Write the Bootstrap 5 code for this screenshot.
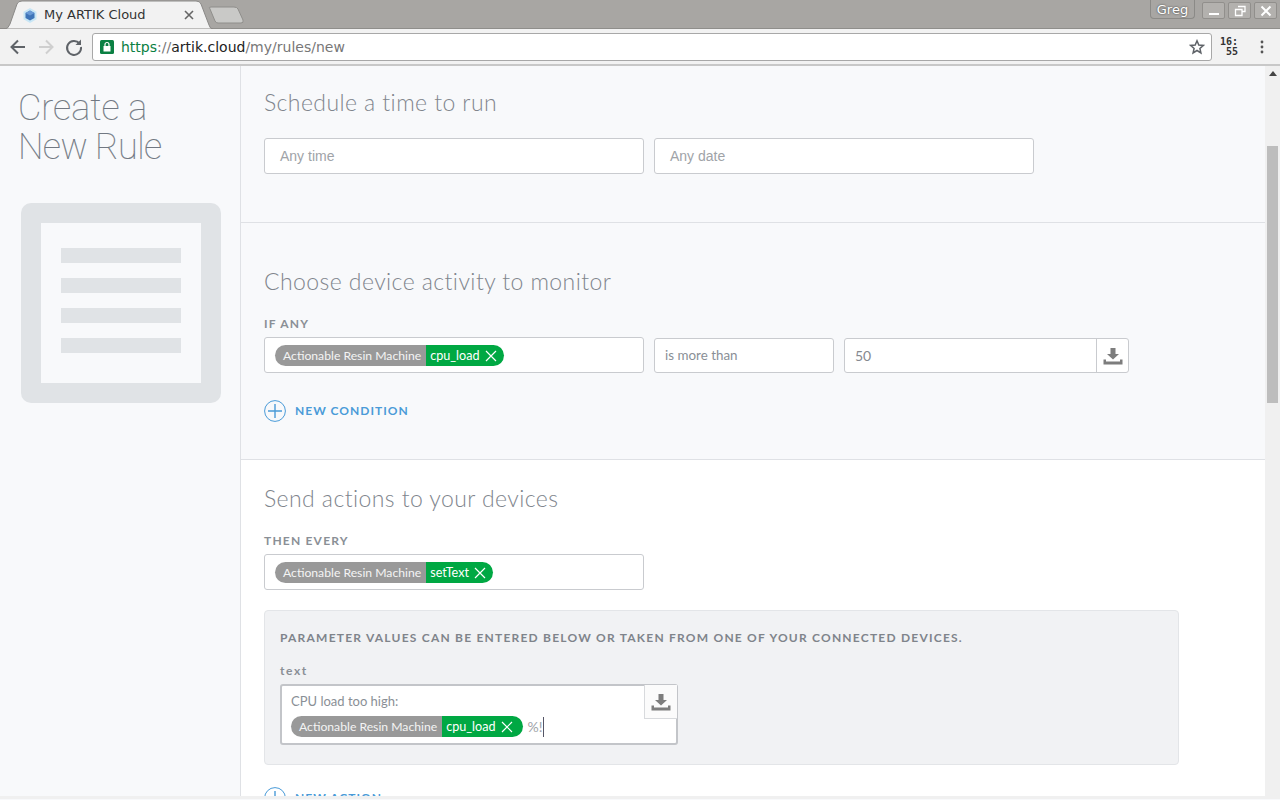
<!DOCTYPE html>
<html lang="en">
<head>
<meta charset="UTF-8">
<title>My ARTIK Cloud</title>
<link rel="stylesheet" href="https://cdn.jsdelivr.net/npm/bootstrap@5.3.0/dist/css/bootstrap.min.css">
<style>
html, body { height: 100%; overflow: hidden; }
body { background: #f8f9fb; font-family: "Lato", "Liberation Sans", sans-serif; color: #8a8f96; }
.app-shell { width: 1280px; height: 800px; }
.tab-strip { height: 29px; background: #a8a6a3; border-bottom: 1px solid #8f8e8b; }
.tab-shape { width: 245px; height: 29px; flex: none; }
.tab-title { font: 13px "DejaVu Sans", sans-serif; fill: #333; }
.user-chip { width: 45px; height: 19px; margin-right: 4px; border: 1px solid #8b8a87; border-top: 0; border-radius: 0 0 4px 4px; font: 13px "DejaVu Sans", sans-serif; color: #fff; text-shadow: 0 0 2px #333; line-height: 20px; text-align: center; }
.win-btn { width: 23px; height: 17px; margin-left: 3px; margin-top: 2px; border: 1px solid #918f8c; border-radius: 2px; background: #b3b1ae; }
.win-last { margin-right: 3px; }
.tool-bar { height: 37px; background: #f2f2f2; border-bottom: 2px solid #c8c8c8; padding-left: 8px; }
.tool-icon { width: 20px; height: 20px; margin-right: 8px; flex: none; }
.url-box { width: 1120px; height: 28px; background: #fff; border: 1px solid #a8a8a8; border-radius: 3px; font: 14px "DejaVu Sans", sans-serif; padding: 0 6px 0 7px; }
.url-lock { margin-right: 7px; flex: none; }
.url-green { color: #0b8043; }
.url-dim { color: #777; }
.url-dark { color: #222; }
.clock-text { width: 20px; margin-left: 8px; font: bold 10px/10px "DejaVu Sans Mono", monospace; color: #333; }
.kebab-icon { margin-left: 20px; }
.page-body { height: 733px; }
.side-col { width: 241px; flex: none; border-right: 1px solid #dfe1e5; padding: 23px 0 0 18px; }
.side-title { font: 100 36px/39px "Roboto", sans-serif; color: #717882; margin: 0 0 36px; -webkit-text-stroke: .15px #717882; }
.title-tight { letter-spacing: -.6px; }
.rule-art { width: 200px; height: 200px; margin-left: 3px; background: #e0e3e6; border-radius: 10px; padding: 20px; }
.rule-art-inner { width: 160px; height: 160px; background: #f8f9fb; padding: 25px 20px 0; }
.rule-art-inner span { display: block; height: 15px; background: #e0e3e6; margin-bottom: 15px; }
.main-col { width: 1024px; flex: none; overflow: hidden; }
.scroll-rail { width: 15px; flex: none; background: #f0f0f0; }
.scroll-up { width: 0; height: 0; margin: 5px auto 0; border: 4px solid transparent; border-top: 0; border-bottom: 5px solid #444; }
.scroll-thumb { width: 11px; height: 257px; margin: 70px auto 0; background: #bdbdbd; }
.sect-a { height: 157px; padding: 22px 23px 0; border-bottom: 1px solid #dfe1e5; }
.sect-b { height: 237px; padding: 44px 23px 0; border-bottom: 1px solid #dfe1e5; }
.sect-c { padding: 24px 23px 0; background: #fff; height: 340px; }
.sect-heading { font-size: 23px; font-weight: 300; line-height: 28px; color: #80858d; letter-spacing: .42px; margin: 0 0 22px; }
.cap-label { font-size: 12px; font-weight: 700; letter-spacing: 1.2px; line-height: 14px; color: #8a8f96; margin: 0 0 6px; }
.fld-row { gap: 10px; }
.fld { height: 36px; background: #fff; border: 1px solid #c9cbcf; border-radius: 3px; font-size: 14px; }
.fld-any { width: 380px; padding: 0 15px; color: #a0a3a8; font-family: "Liberation Sans", sans-serif; }
.fld-tags { width: 380px; padding-left: 10px; }
.fld-op { width: 180px; height: 35px; margin-top: 1px; padding-left: 10px; font-size: 13.4px; color: #8a8f96; }
.fld-val { width: 285px; height: 35px; margin-top: 1px; }
.fld-val-num { flex: 1; padding-left: 10px; color: #85898f; }
.fld-val-btn { width: 32px; border-left: 1px solid #c9cbcf; height: 100%; }
.tag-grey { height: 21px; background: #999; color: #f4f4f4; font-size: 12.2px; line-height: 21px; border-radius: 11px 0 0 11px; padding: 0 5px 0 8px; white-space: nowrap; }
.tag-green { height: 21px; background: #00a843; color: #fff; font-size: 12.6px; line-height: 21px; border-radius: 0 11px 11px 0; padding: 0 7px 0 4px; white-space: nowrap; }
.tag-wide { padding-right: 10px; }
.tag-x { width: 12px; height: 12px; margin-left: 5px; vertical-align: -2px; }
.add-link { color: #4a9bd8; font-size: 12px; font-weight: 700; letter-spacing: 1.0px; gap: 9px; text-decoration: none; }
.add-cond { margin-top: 27px; }
.add-act { margin-top: 22px; }
.param-box { width: 915px; height: 155px; margin-top: 20px; background: #f1f2f4; border: 1px solid #e3e5e8; border-radius: 4px; padding: 20px 15px 0; }
.param-note { font-size: 12px; font-weight: 700; letter-spacing: 1.22px; line-height: 14px; color: #7f848b; margin: 0 0 19px; }
.param-label { font-size: 12px; font-weight: 700; letter-spacing: 1.6px; line-height: 14px; color: #8a8f96; margin: 0 0 6px; }
.param-input { width: 398px; height: 61px; background: #fff; border: 2px solid #c3c5c9; border-radius: 3px; padding: 7px 0 0 9px; font-size: 13px; color: #8a8f96; }
.param-line { line-height: 16px; margin-bottom: 7px; }
.param-btn { top: -1px; right: -1px; width: 33px; height: 34px; background: #fbfbfb; border: 1px solid #d8dadd; border-top: 0; border-right: 0; }
.pct-text { margin-left: 5px; color: #a0a3a8; font-size: 14px; }
.caret-mark { display: inline-block; width: 1px; height: 20px; background: #556; }
.bottom-strip { height: 3px; background: #f0f0f0; margin-top: -3px; position: relative; }
</style>
</head>
<body>
<div class="app-shell d-flex flex-column">
  <div class="tab-strip d-flex">
    <svg class="tab-shape" viewBox="0 0 245 29">
      <path d="M210 9 Q208 7 211 7 H234 Q237 7 238 9 L243 20 Q244 23 241 23 H218 Q216 23 215 21 Z" fill="#c9c9c7" stroke="#8f8e8b"/>
      <path d="M0 29 H5 Q8 29 10 24 L17 4 Q18 1 22 1 H196 Q200 1 201 4 L209 25 Q210 29 213 29 H0" fill="#f2f2f2" stroke="#8a8987"/>
      <path d="M30 8 L36.5 11.7 V19.3 L30 23 L23.5 19.3 V11.7 Z" fill="#c8e6f5"/>
      <path d="M30 10.5 L34.5 13 V18 L30 20.5 L25.5 18 V13 Z" fill="#3f74b8"/>
      <path d="M30 10.5 L34.5 13 L30 15.5 L25.5 13 Z" fill="#6a9ad6"/>
      <text x="44" y="19" class="tab-title">My ARTIK Cloud</text>
      <path d="M185 11 L193 19 M193 11 L185 19" stroke="#666" stroke-width="1.6"/>
    </svg>
    <div class="ms-auto d-flex align-items-start">
      <div class="user-chip">Greg</div>
      <div class="win-btn d-flex align-items-center justify-content-center"><svg width="12" height="12" viewBox="0 0 12 12"><path d="M1 9 H11" stroke="#fff" stroke-width="2"/></svg></div>
      <div class="win-btn d-flex align-items-center justify-content-center"><svg width="12" height="12" viewBox="0 0 12 12"><path d="M4 1.5 H11 V6.5 H8 M1.5 4.5 H8 V10.5 H1.5 Z" stroke="#fff" fill="none" stroke-width="1.3"/></svg></div>
      <div class="win-btn win-last d-flex align-items-center justify-content-center"><svg width="12" height="12" viewBox="0 0 12 12"><path d="M1.5 1.5 L10.5 10.5 M10.5 1.5 L1.5 10.5" stroke="#fff" stroke-width="2"/></svg></div>
    </div>
  </div>
  <div class="tool-bar d-flex align-items-center">
    <svg class="tool-icon" viewBox="0 0 20 20"><path d="M17 10 H4 M10 3.5 L3.5 10 L10 16.5" fill="none" stroke="#5f6368" stroke-width="2"/></svg>
    <svg class="tool-icon" viewBox="0 0 20 20"><path d="M3 10 H16 M10 3.5 L16.5 10 L10 16.5" fill="none" stroke="#cfcfcf" stroke-width="2"/></svg>
    <svg class="tool-icon" viewBox="0 0 20 20"><path d="M15.5 6.5 A7 7 0 1 0 17 10" fill="none" stroke="#5f6368" stroke-width="2"/><path d="M17 2.5 V8 H11.5 Z" fill="#5f6368"/></svg>
    <div class="url-box d-flex align-items-center">
      <svg width="14" height="14" viewBox="0 0 14 14" class="url-lock"><rect width="14" height="14" rx="1.5" fill="#0b8043"/><rect x="3.5" y="6" width="7" height="5.5" fill="#fff"/><path d="M5 6 V4.5 A2 2 0 0 1 9 4.5 V6" fill="none" stroke="#fff" stroke-width="1.2"/></svg>
      <span><span class="url-green">https</span><span class="url-dim">://</span><span class="url-dark">artik.cloud</span><span class="url-dim">/my/rules/new</span></span>
      <svg width="16" height="16" viewBox="0 0 16 16" class="ms-auto"><path d="M8 1.8 L9.8 6 L14.3 6.4 L10.9 9.4 L11.9 13.9 L8 11.5 L4.1 13.9 L5.1 9.4 L1.7 6.4 L6.2 6 Z" fill="none" stroke="#5f6368" stroke-width="1.5"/></svg>
    </div>
    <div class="clock-text">16:<br>&nbsp;55</div>
    <svg width="4" height="14" viewBox="0 0 4 14" class="kebab-icon"><circle cx="2" cy="2" r="1.4" fill="#555"/><circle cx="2" cy="7" r="1.4" fill="#555"/><circle cx="2" cy="12" r="1.4" fill="#555"/></svg>
  </div>
  <div class="page-body d-flex">
    <aside class="side-col">
      <h1 class="side-title">Create a<br><span class="title-tight">New Rule</span></h1>
      <div class="rule-art"><div class="rule-art-inner"><span></span><span></span><span></span><span></span></div></div>
    </aside>
    <main class="main-col">
      <section class="sect-a">
        <h2 class="sect-heading">Schedule a time to run</h2>
        <div class="d-flex fld-row">
          <div class="fld fld-any d-flex align-items-center">Any time</div>
          <div class="fld fld-any d-flex align-items-center">Any date</div>
        </div>
      </section>
      <section class="sect-b">
        <h2 class="sect-heading">Choose device activity to monitor</h2>
        <p class="cap-label">IF ANY</p>
        <div class="d-flex fld-row align-items-start">
          <div class="fld fld-tags d-flex align-items-center"><span class="tag-grey">Actionable Resin Machine</span><span class="tag-green">cpu_load<svg class="tag-x" viewBox="0 0 12 12"><path d="M1 1 L11 11 M11 1 L1 11" stroke="#fff" stroke-width="1.2"/></svg></span></div>
          <div class="fld fld-op d-flex align-items-center">is more than</div>
          <div class="fld fld-val d-flex align-items-center"><span class="fld-val-num">50</span><span class="fld-val-btn d-flex align-items-center justify-content-center"><svg width="20" height="18" viewBox="0 0 20 18"><path d="M7.5 1 H12.5 V7 H16 L10 12.5 L4 7 H7.5 Z M.5 12.5 H3 V14.5 H17 V12.5 H19.5 V17.5 H.5 Z" fill="#7d7d7d"/></svg></span></div>
        </div>
        <a class="add-link add-cond d-flex align-items-center" href="#"><svg width="22" height="22" viewBox="0 0 22 22"><circle cx="11" cy="11" r="10.4" fill="none" stroke="#4a9bd8"/><path d="M11 4 V18 M4 11 H18" stroke="#4a9bd8" stroke-width="1.4"/></svg>NEW CONDITION</a>
      </section>
      <section class="sect-c">
        <h2 class="sect-heading">Send actions to your devices</h2>
        <p class="cap-label">THEN EVERY</p>
        <div class="fld fld-tags d-flex align-items-center"><span class="tag-grey">Actionable Resin Machine</span><span class="tag-green">setText<svg class="tag-x" viewBox="0 0 12 12"><path d="M1 1 L11 11 M11 1 L1 11" stroke="#fff" stroke-width="1.2"/></svg></span></div>
        <div class="param-box">
          <p class="param-note">PARAMETER VALUES CAN BE ENTERED BELOW OR TAKEN FROM ONE OF YOUR CONNECTED DEVICES.</p>
          <p class="param-label">text</p>
          <div class="param-input position-relative">
            <div class="param-line">CPU load too high:</div>
            <div class="d-flex align-items-center"><span class="tag-grey">Actionable Resin Machine</span><span class="tag-green tag-wide">cpu_load<svg class="tag-x" viewBox="0 0 12 12"><path d="M1 1 L11 11 M11 1 L1 11" stroke="#fff" stroke-width="1.2"/></svg></span><span class="pct-text">%!</span><span class="caret-mark"></span></div>
            <div class="param-btn position-absolute d-flex align-items-center justify-content-center"><svg width="20" height="18" viewBox="0 0 20 18"><path d="M7.5 1 H12.5 V7 H16 L10 12.5 L4 7 H7.5 Z M.5 12.5 H3 V14.5 H17 V12.5 H19.5 V17.5 H.5 Z" fill="#7d7d7d"/></svg></div>
          </div>
        </div>
        <a class="add-link add-act d-flex align-items-center" href="#"><svg width="22" height="22" viewBox="0 0 22 22"><circle cx="11" cy="11" r="10.4" fill="none" stroke="#4a9bd8"/><path d="M11 4 V18 M4 11 H18" stroke="#4a9bd8" stroke-width="1.4"/></svg>NEW ACTION</a>
      </section>
    </main>
    <div class="scroll-rail"><div class="scroll-up"></div><div class="scroll-thumb"></div></div>
  </div>
  <div class="bottom-strip"></div>
</div>
<script src="https://cdn.jsdelivr.net/npm/bootstrap@5.3.0/dist/js/bootstrap.bundle.min.js"></script>
</body>
</html>
